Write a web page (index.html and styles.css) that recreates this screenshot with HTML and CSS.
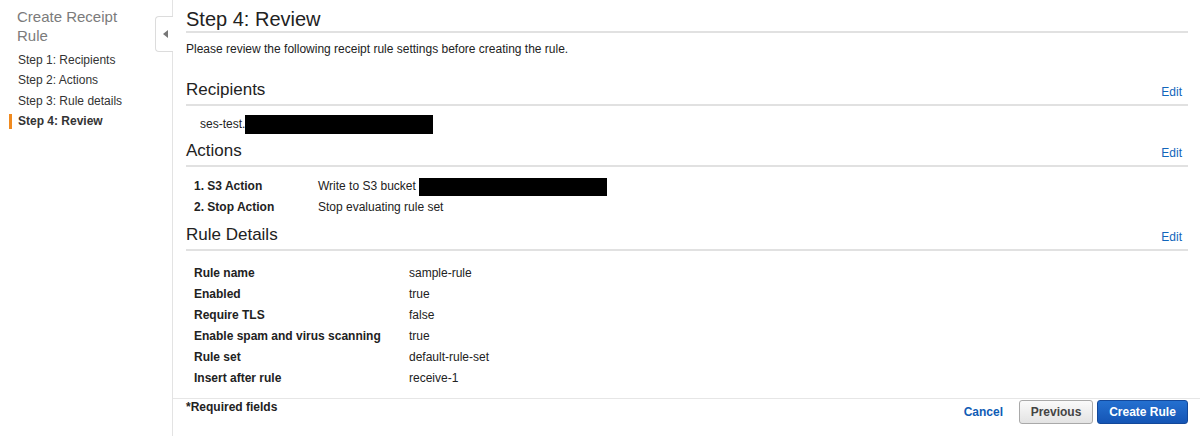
FILE: index.html
```html
<!DOCTYPE html>
<html>
<head>
<meta charset="utf-8">
<link rel="stylesheet" href="styles.css">
</head>
<body>
<div class="page">
  <aside class="sidebar">
    <div class="side-title">Create Receipt Rule</div>
    <ul class="steps">
      <li>Step 1: Recipients</li>
      <li>Step 2: Actions</li>
      <li>Step 3: Rule details</li>
      <li class="active">Step 4: Review</li>
    </ul>
    <div class="toggle"><span class="tri"></span></div>
  </aside>
  <main class="main">
    <div class="content">
      <h1 class="page-title">Step 4: Review</h1>
      <p class="desc">Please review the following receipt rule settings before creating the rule.</p>

      <div class="section-head sh-recipients">
        <h2>Recipients</h2><a class="edit">Edit</a>
      </div>
      <div class="recipient">ses-test.<span class="redact r1"></span></div>

      <div class="section-head sh-actions">
        <h2>Actions</h2><a class="edit">Edit</a>
      </div>
      <div class="actions">
        <div class="arow"><span class="alabel">1. S3 Action</span><span>Write to S3 bucket <span class="redact r2"></span></span></div>
        <div class="arow"><span class="alabel">2. Stop Action</span><span>Stop evaluating rule set</span></div>
      </div>

      <div class="section-head sh-details">
        <h2>Rule Details</h2><a class="edit">Edit</a>
      </div>
      <div class="details">
        <div class="drow"><span class="dlabel">Rule name</span><span>sample-rule</span></div>
        <div class="drow"><span class="dlabel">Enabled</span><span>true</span></div>
        <div class="drow"><span class="dlabel">Require TLS</span><span>false</span></div>
        <div class="drow"><span class="dlabel">Enable spam and virus scanning</span><span>true</span></div>
        <div class="drow"><span class="dlabel">Rule set</span><span>default-rule-set</span></div>
        <div class="drow"><span class="dlabel">Insert after rule</span><span>receive-1</span></div>
      </div>
    </div>
    <div class="footer">
      <div class="req">*Required fields</div>
      <div class="buttons">
        <a class="cancel">Cancel</a>
        <button class="btn btn-prev">Previous</button>
        <button class="btn btn-create">Create Rule</button>
      </div>
    </div>
  </main>
</div>
</body>
</html>
```
FILE: styles.css
```css
* { box-sizing: border-box; }
html, body { margin: 0; padding: 0; background: #fff; }
body {
  font-family: "Liberation Sans", Arial, Helvetica, sans-serif;
  color: #333;
  font-size: 12px;
  width: 1200px;
  height: 436px;
  overflow: hidden;
}
.page {
  display: flex;
  height: 436px;
}
.sidebar {
  position: relative;
  width: 173px;
  flex: none;
  border-right: 1px solid #e3e3e3;
  padding: 7px 0 0 0;
}
.side-title {
  font-size: 15px;
  line-height: 19px;
  color: #7b7b7b;
  padding-left: 17px;
  width: 130px;
}
.steps {
  list-style: none;
  margin: 5px 0 0 0;
  padding: 0;
}
.steps li {
  font-size: 12px;
  line-height: 20.4px;
  color: #333;
  padding-left: 18px;
  position: relative;
}
.steps li.active {
  font-weight: bold;
}
.steps li.active::before {
  content: "";
  position: absolute;
  left: 9px;
  top: 3px;
  width: 3px;
  height: 15px;
  background: #f08a1f;
}
.toggle {
  position: absolute;
  right: -1px;
  top: 16px;
  width: 18px;
  height: 36px;
  background: #fff;
  border: 1px solid #dcdcdc;
  border-right: none;
  border-radius: 4px 0 0 4px;
  display: flex;
  align-items: center;
  justify-content: center;
}
.tri {
  width: 0;
  height: 0;
  border-top: 4px solid transparent;
  border-bottom: 4px solid transparent;
  border-right: 5px solid #777;
  margin-left: 1px;
}
.main {
  flex: 1;
  display: flex;
  flex-direction: column;
}
.content {
  padding: 7px 12px 0 13px;
  flex: 1;
}
.page-title {
  margin: 0;
  font-size: 20px;
  font-weight: normal;
  line-height: 24px;
  color: #222;
  border-bottom: 2px solid #e1e1e1;
}
.desc {
  margin: 7px 0 0 0;
  line-height: 18px;
  font-size: 12px;
  color: #222;
}
.section-head {
  display: flex;
  justify-content: space-between;
  align-items: flex-end;
  border-bottom: 2px solid #e1e1e1;
  padding-bottom: 3px;
}
.section-head h2 {
  margin: 0;
  font-size: 17px;
  font-weight: normal;
  line-height: 22px;
  color: #222;
}
.edit {
  color: #1166bb;
  font-size: 12px;
  line-height: 16px;
  padding-right: 6px;
  margin-bottom: 1px;
  cursor: pointer;
}
.sh-recipients { margin-top: 21px; }
.sh-actions { margin-top: 6px; }
.sh-details { margin-top: 6px; }
.recipient {
  margin-top: 8px;
  padding-left: 14px;
  line-height: 20px;
  height: 20px;
  display: flex;
  align-items: center;
  color: #222;
}
.redact {
  display: inline-block;
  background: #000;
  vertical-align: middle;
}
.r1 { width: 188px; height: 19px; }
.r2 { width: 188px; height: 18px; }
.actions { margin-top: 9px; }
.arow {
  display: flex;
  line-height: 21px;
  padding-left: 8px;
  color: #222;
}
.alabel {
  width: 124px;
  font-weight: bold;
}
.details { margin-top: 12px; }
.drow {
  display: flex;
  line-height: 21px;
  padding-left: 8px;
  color: #222;
}
.dlabel {
  width: 215px;
  font-weight: bold;
}
.footer {
  border-top: 1px solid #e6e6e6;
  height: 38px;
  display: flex;
  justify-content: space-between;
  align-items: flex-start;
  padding: 0 12px 0 13px;
}
.req {
  font-weight: bold;
  line-height: 16px;
  margin-top: 0;
  color: #222;
}
.buttons {
  display: flex;
  align-items: center;
  height: 26px;
}
.cancel {
  color: #0f5cb5;
  font-weight: bold;
  margin-right: 16px;
  cursor: pointer;
}
.btn {
  font-family: inherit;
  font-size: 12px;
  font-weight: bold;
  height: 24px;
  border-radius: 3px;
  padding: 0;
  cursor: pointer;
}
.btn-prev {
  width: 74px;
  color: #444;
  background: linear-gradient(#fafafa, #e3e3e3);
  border: 1px solid #a9a9a9;
  margin-right: 4px;
}
.btn-create {
  width: 91px;
  color: #fff;
  background: linear-gradient(#2470d0, #1555b5);
  border: 1px solid #13489a;
}
```
